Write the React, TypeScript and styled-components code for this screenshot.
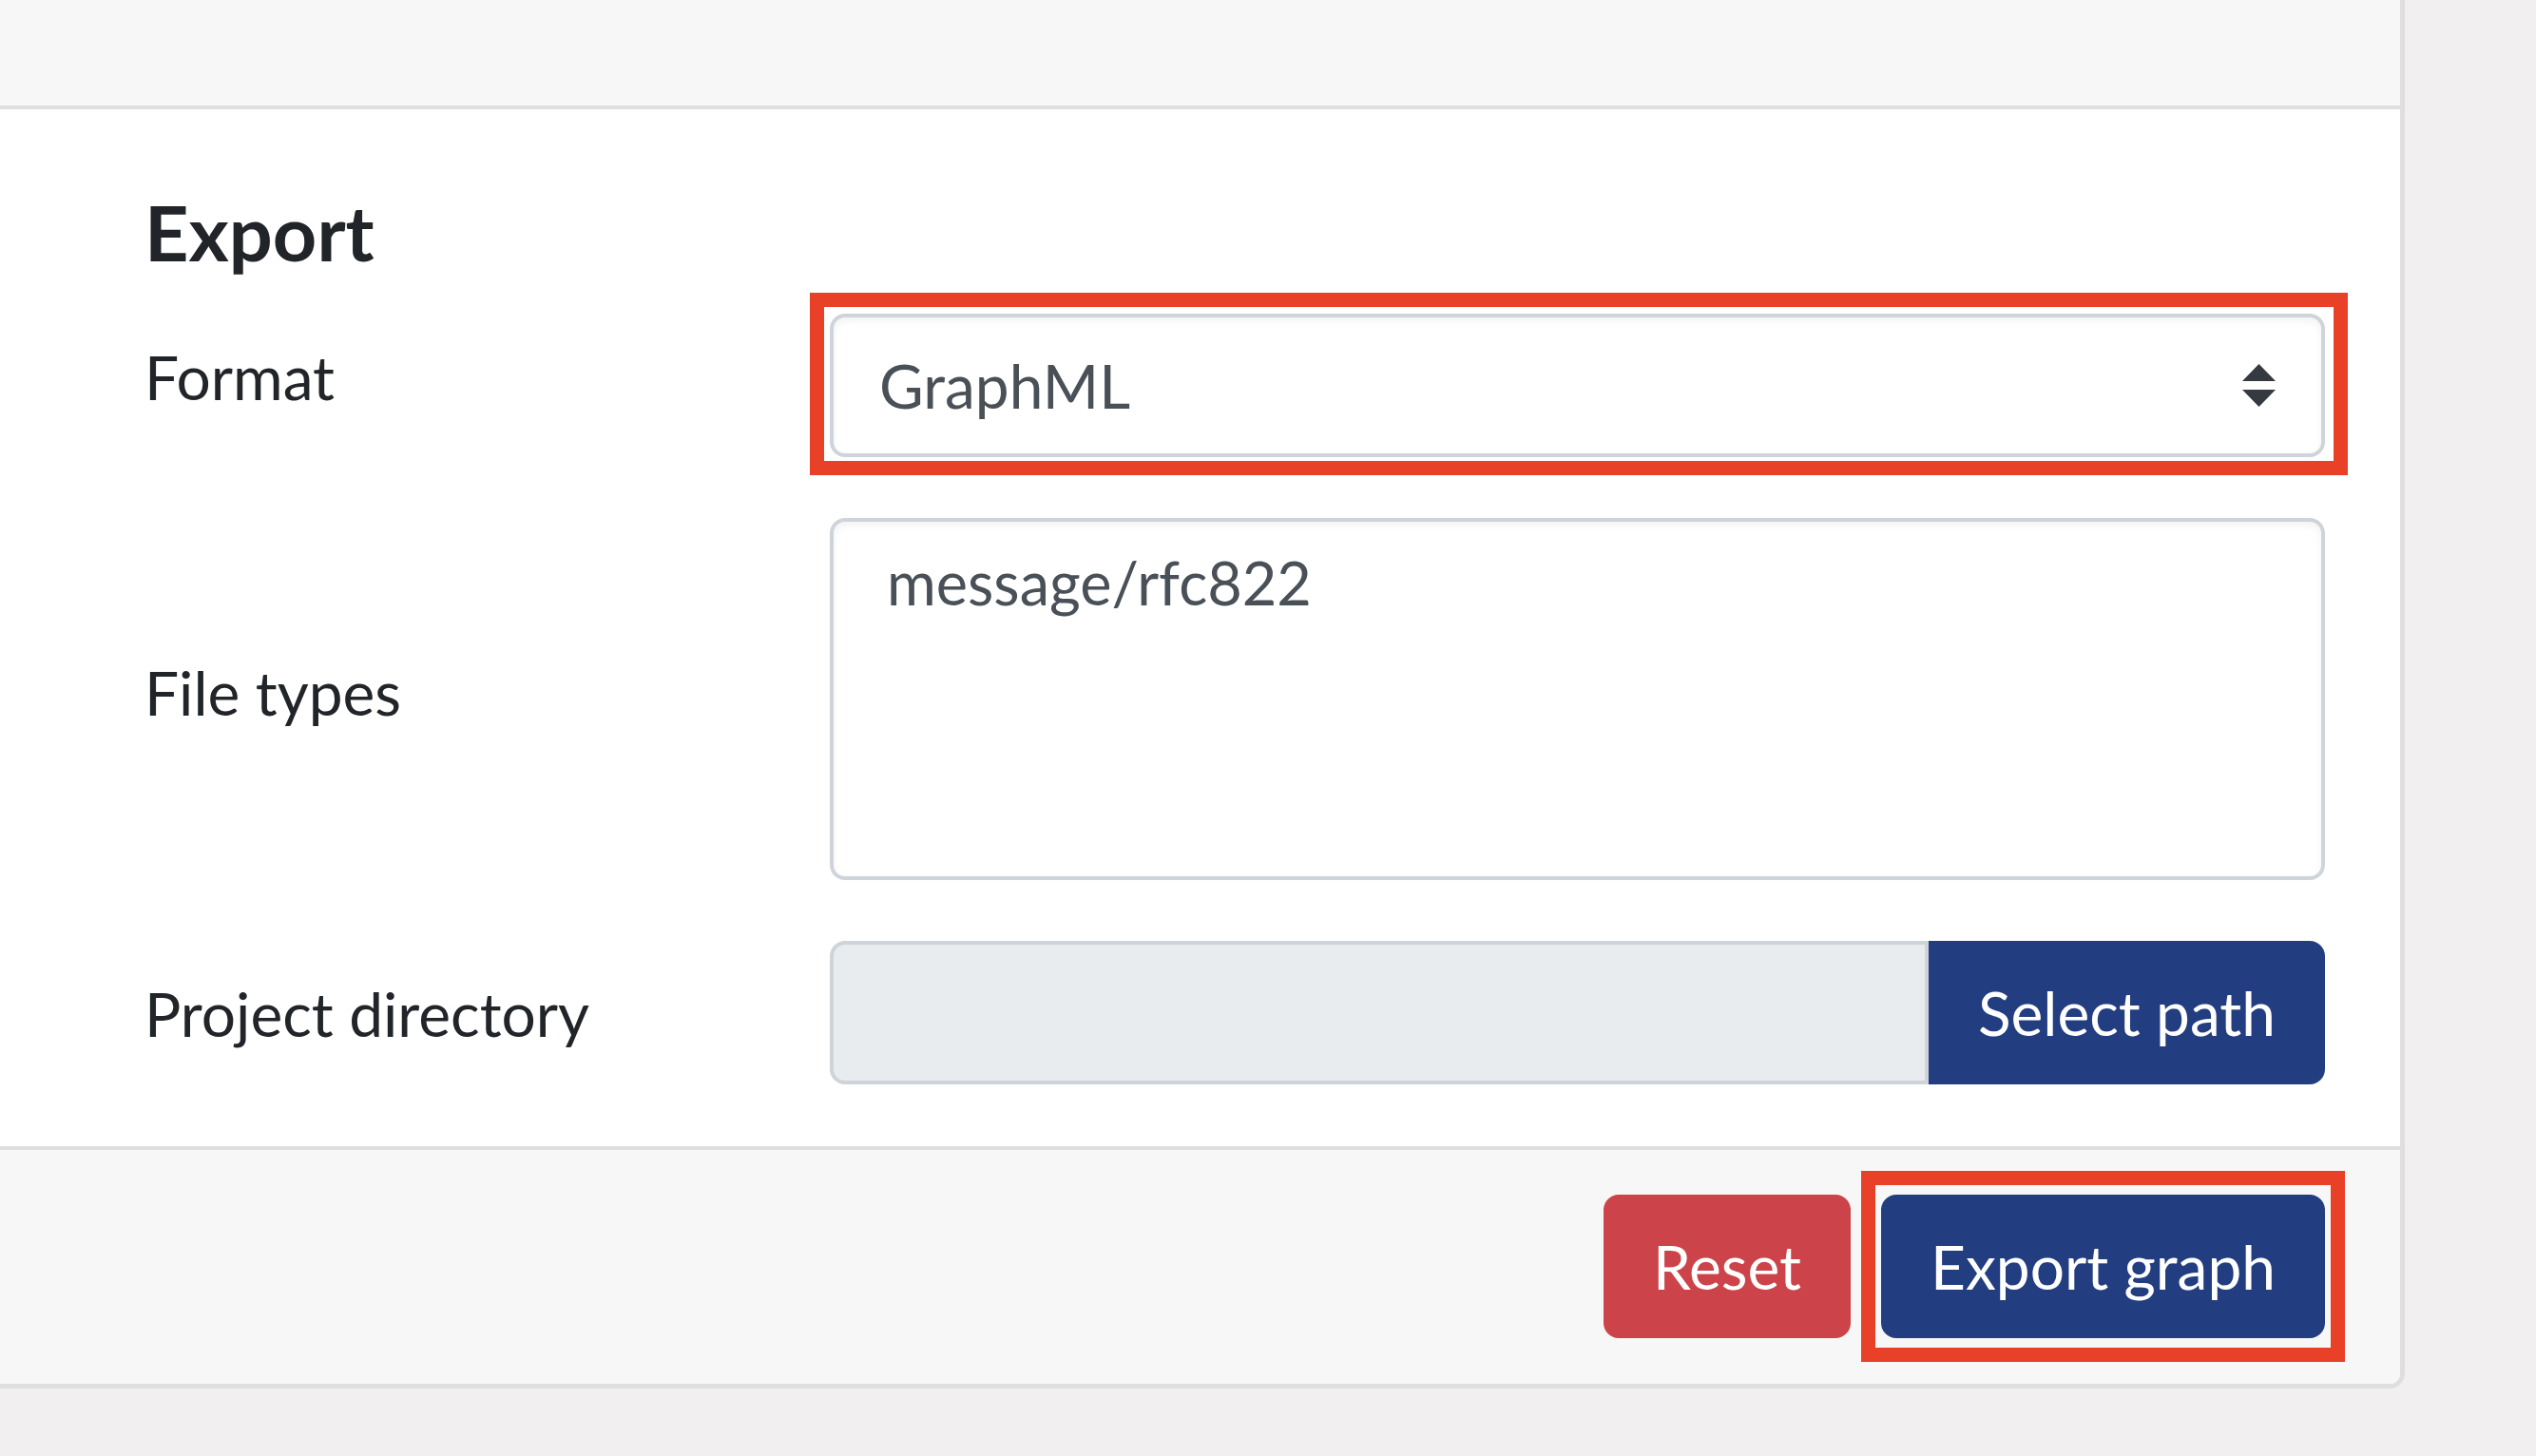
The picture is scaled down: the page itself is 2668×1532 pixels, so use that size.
import React from 'react';
import styled, { createGlobalStyle } from 'styled-components';

const GlobalStyle = createGlobalStyle`
  html, body {
    margin: 0;
    padding: 0;
    background: #f1eff0;
  }
  body {
    font-family: Lato, "Noto Sans", sans-serif;
    color: #212529;
  }
  * {
    box-sizing: border-box;
  }
`;

const Page = styled.div`
  width: 2668px;
  height: 1532px;
  padding-right: 138px;
  background: #f1eff0;
  overflow: hidden;
`;

const Card = styled.div`
  width: 2530px;
  background: #fff;
  border-right: 5px solid #dfdfdf;
  border-bottom: 5px solid #dfdfdf;
  border-bottom-right-radius: 16px;
`;

const CardHeader = styled.div`
  height: 115px;
  background: #f7f7f7;
  border-bottom: 4px solid #dfdfdf;
`;

const CardBody = styled.div`
  padding: 80px 79px 65px 152px;
`;

const Title = styled.h5`
  margin: 0 0 38px;
  font-size: 81px;
  font-weight: 700;
  line-height: 1.2;
  color: #212529;
`;

const Form = styled.div`
  display: grid;
  grid-template-columns: 721px 1fr;
  row-gap: 64px;
  align-items: start;
`;

const Label = styled.label<{ $top: number }>`
  font-size: 64px;
  line-height: 96px;
  padding-top: ${p => p.$top}px;
  color: #212529;
`;

const Highlight = styled.div<{ $t: number; $r: number; $b: number; $l: number }>`
  position: relative;
  &::after {
    content: '';
    position: absolute;
    top: -${p => p.$t}px;
    right: -${p => p.$r}px;
    bottom: -${p => p.$b}px;
    left: -${p => p.$l}px;
    border: 15px solid #e94128;
    pointer-events: none;
  }
`;

const SelectBox = styled.div`
  height: 151px;
  display: flex;
  align-items: center;
  justify-content: space-between;
  padding: 0 48px;
  border: 4px solid #ced4da;
  border-radius: 16px;
  background: #fff;
  box-shadow: inset 0 4px 8px rgba(0, 0, 0, 0.05);
  font-size: 64px;
  line-height: 96px;
  color: #495057;
`;

const ListBox = styled.div`
  height: 381px;
  padding: 16px 48px 0 56px;
  border: 4px solid #ced4da;
  border-radius: 16px;
  background: #fff;
  box-shadow: inset 0 4px 8px rgba(0, 0, 0, 0.05);
`;

const Option = styled.div`
  font-size: 63px;
  line-height: 96px;
  color: #495057;
`;

const InputGroup = styled.div`
  display: flex;
  height: 151px;
`;

const PathInput = styled.div`
  flex: 1;
  background: #e9ecef;
  border: 4px solid #ced4da;
  border-radius: 16px 0 0 16px;
`;

const Button = styled.button<{ $variant: 'primary' | 'danger'; $joined?: boolean }>`
  height: 151px;
  padding: 0 48px;
  border: 4px solid ${p => (p.$variant === 'primary' ? '#233e80' : '#cc4449')};
  background: ${p => (p.$variant === 'primary' ? '#233e80' : '#cc4449')};
  border-radius: ${p => (p.$joined ? '0 16px 16px 0' : '16px')};
  color: #fff;
  font-family: Lato, "Noto Sans", sans-serif;
  font-size: 64px;
  line-height: 96px;
  white-space: nowrap;
  cursor: pointer;
`;

const CardFooter = styled.div`
  display: flex;
  justify-content: flex-end;
  gap: 32px;
  padding: 47px 79px 48px;
  background: #f7f7f7;
  border-top: 4px solid #dfdfdf;
  border-bottom-right-radius: 11px;
`;

const SortArrows = () => (
  <svg width="35" height="45" viewBox="0 0 4 5" preserveAspectRatio="none">
    <path d="M2 0L0 2h4zm0 5L0 3h4z" fill="#343a40" />
  </svg>
);

export default function App() {
  return (
    <Page>
      <GlobalStyle />
      <Card>
        <CardHeader />
        <CardBody>
          <Title>Export</Title>
          <Form>
            <Label $top={19}>Format</Label>
            <Highlight $t={22} $r={24} $b={19} $l={21}>
              <SelectBox>
                <span>GraphML</span>
                <SortArrows />
              </SelectBox>
            </Highlight>

            <Label $top={136}>File types</Label>
            <ListBox>
              <Option>message/rfc822</Option>
            </ListBox>

            <Label $top={29}>Project directory</Label>
            <InputGroup>
              <PathInput />
              <Button $variant="primary" $joined>Select path</Button>
            </InputGroup>
          </Form>
        </CardBody>
        <CardFooter>
          <Button $variant="danger">Reset</Button>
          <Highlight $t={25} $r={21} $b={25} $l={21}>
            <Button $variant="primary">Export graph</Button>
          </Highlight>
        </CardFooter>
      </Card>
    </Page>
  );
}
